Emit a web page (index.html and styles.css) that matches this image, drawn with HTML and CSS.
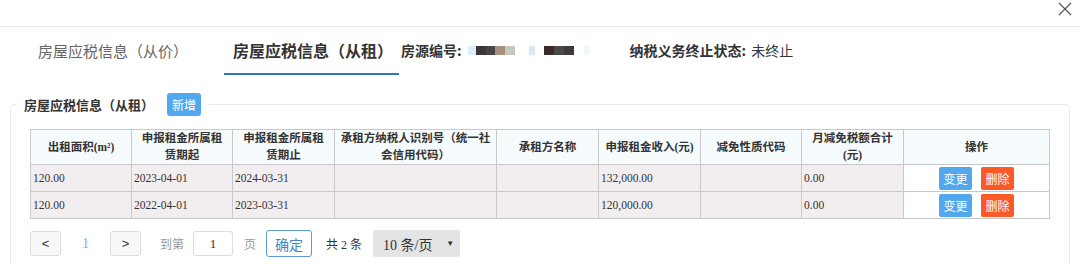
FILE: index.html
```html
<!DOCTYPE html>
<html lang="zh-CN">
<head>
<meta charset="UTF-8" />
<meta name="viewport" content="width=device-width, initial-scale=1" />
<title>房屋应税信息</title>
<link rel="stylesheet" href="styles.css">
</head>
<body>
  <div class="top-bar">
    <svg class="close-icon" width="14" height="14" viewBox="0 0 14 14">
      <path d="M1 1 L13 13 M13 1 L1 13" stroke="#555" stroke-width="1.2" fill="none" />
    </svg>
  </div>

  <div class="tabs">
    <div class="tab">房屋应税信息（从价）</div>
    <div class="tab active">房屋应税信息（从租）</div>
    <div class="info">
      <span class="info-label">房源编号:</span>
      <span class="masked">
        <i style="width:8px;background:#d8ecfa"></i><i style="width:10px;background:#3d3535"></i><i style="width:9px;background:#4a4444"></i><i style="width:10px;background:#a88f80"></i><i style="width:10px;background:#c5c8bc"></i><i style="width:14px;background:#fff"></i><i style="width:6px;background:#d6e8fa"></i><i style="width:9px;background:#fff"></i><i style="width:10px;background:#3a2a25"></i><i style="width:10px;background:#4a4747"></i><i style="width:10px;background:#3d3a3a"></i><i style="width:10px;background:#fff"></i><i style="width:6px;background:#eef8fc"></i>
      </span>
    </div>
    <div class="info status">
      <span class="info-label">纳税义务终止状态:</span>
      <span>未终止</span>
    </div>
  </div>

  <fieldset class="panel">
    <legend>
      <span class="legend-title">房屋应税信息（从租）</span>
      <button class="btn btn-blue btn-add">新增</button>
    </legend>

    <table class="data-table">
      <colgroup>
        <col style="width:101px"><col style="width:101px"><col style="width:102px">
        <col style="width:162px"><col style="width:102px"><col style="width:102px">
        <col style="width:101px"><col style="width:102px"><col style="width:146px">
      </colgroup>
      <thead>
        <tr>
          <th>出租面积(m²)</th>
          <th>申报租金所属租<br>赁期起</th>
          <th>申报租金所属租<br>赁期止</th>
          <th>承租方纳税人识别号（统一社<br>会信用代码）</th>
          <th>承租方名称</th>
          <th>申报租金收入(元)</th>
          <th>减免性质代码</th>
          <th>月减免税额合计<br>(元)</th>
          <th>操作</th>
        </tr>
      </thead>
      <tbody>
        <tr>
          <td>120.00</td>
          <td>2023-04-01</td>
          <td>2024-03-31</td>
          <td></td>
          <td></td>
          <td>132,000.00</td>
          <td></td>
          <td>0.00</td>
          <td class="actions">
            <button class="btn btn-blue">变更</button>
            <button class="btn btn-red">删除</button>
          </td>
        </tr>
        <tr>
          <td>120.00</td>
          <td>2022-04-01</td>
          <td>2023-03-31</td>
          <td></td>
          <td></td>
          <td>120,000.00</td>
          <td></td>
          <td>0.00</td>
          <td class="actions">
            <button class="btn btn-blue">变更</button>
            <button class="btn btn-red">删除</button>
          </td>
        </tr>
      </tbody>
    </table>

    <div class="pager">
      <button class="page-btn">&lt;</button>
      <span class="page-num">1</span>
      <button class="page-btn">&gt;</button>
      <span class="pager-text goto">到第</span>
      <input class="page-input" type="text" value="1" />
      <span class="pager-text">页</span>
      <button class="confirm-btn">确定</button>
      <span class="total">共 2 条</span>
      <div class="page-size">
        <span>10 条/页</span>
        <span class="arrow">▼</span>
      </div>
    </div>
  </fieldset>
</body>
</html>
```

FILE: styles.css
```css
body {
  margin: 0;
  background-color: #fff;
  color: #333;
  font-family: "Noto Sans CJK SC", "Noto Sans", sans-serif;
}
.top-bar {
  height: 27px;
  border-bottom: 1px solid #ececec;
  box-sizing: border-box;
  display: flex;
  justify-content: flex-end;
  padding: 2px 8px 0 0;
}
.close-icon {
  display: block;
}
.tabs {
  height: 48px;
  display: flex;
  align-items: stretch;
  padding-left: 28px;
}
.tab {
  display: flex;
  align-items: center;
  padding: 0 10px;
  font-size: 15px;
  color: #666;
  border-bottom: 2px solid transparent;
  box-sizing: border-box;
}
.tab.active {
  margin-left: 26px;
  padding: 0 6px 0 9px;
  font-size: 16px;
  font-weight: 700;
  color: #333;
  border-bottom-color: #2b7bb2;
}
.info {
  display: flex;
  align-items: center;
  font-size: 14px;
  color: #333;
  margin-left: 2px;
  padding-bottom: 2px;
}
.info-label {
  font-weight: 700;
  margin-right: 2px;
}
.masked {
  display: flex;
  margin-left: 4px;
}
.masked i {
  display: block;
  height: 9px;
}
.status {
  margin-left: 40px;
}
.status .info-label {
  margin-right: 5px;
}
.panel {
  margin: 18px 11px 0 10px;
  padding: 13px 19px 20px 19px;
  border: 1px solid #ebebeb;
  border-radius: 4px;
}
.panel legend {
  margin-left: -14px;
  padding: 0 8px;
  display: flex;
  align-items: center;
}
.legend-title {
  font-size: 13px;
  font-weight: 700;
  color: #333;
}
.btn {
  border: none;
  color: #fff;
  font-family: "Noto Sans CJK SC", sans-serif;
  font-size: 12px;
  width: 33px;
  height: 23px;
  padding: 0;
  border-radius: 2px;
  cursor: pointer;
}
.btn-blue {
  background-color: #52a8ef;
}
.btn-red {
  background-color: #fb5a28;
  margin-left: 9px;
}
.btn-add {
  margin-left: 13px;
  width: 34px;
  border-radius: 3px;
}
.data-table {
  width: 100%;
  table-layout: fixed;
  border-collapse: collapse;
  font-family: "Liberation Serif", "Noto Sans CJK SC", serif;
  font-size: 11.5px;
  color: #333;
}
.data-table th {
  background-color: #f6fbfe;
  border: 1px solid #c9c9c9;
  font-weight: 700;
  line-height: 17px;
  height: 34px;
  padding: 0;
  text-align: center;
}
.data-table td {
  background-color: #f2edef;
  border: 1px solid #c9c9c9;
  height: 26px;
  padding: 0 2px;
  text-align: left;
}
.data-table td.actions {
  background-color: #fff;
  text-align: center;
  padding: 0;
  font-size: 0;
}
.pager {
  margin-top: 11px;
  display: flex;
  align-items: center;
  font-family: "Liberation Serif", "Noto Sans CJK SC", serif;
}
.page-btn {
  width: 31px;
  height: 25px;
  border: 1px solid #dcdcdc;
  background-color: #f8f8f8;
  border-radius: 3px;
  color: #333;
  font-size: 13px;
  padding: 0;
  cursor: pointer;
}
.page-num {
  width: 49px;
  text-align: center;
  color: #74b5e2;
  font-size: 14px;
}
.pager-text {
  font-size: 12px;
  color: #999;
}
.goto {
  margin-left: 19px;
}
.page-input {
  width: 40px;
  height: 25px;
  box-sizing: border-box;
  margin: 0 11px 0 9px;
  border: 1px solid #dcdcdc;
  border-radius: 3px;
  text-align: center;
  font-family: "Liberation Serif", serif;
  font-size: 13px;
  color: #333;
}
.confirm-btn {
  margin-left: 10px;
  width: 46px;
  height: 27px;
  border: 1px solid #5c9dd0;
  border-radius: 3px;
  background-color: #fff;
  color: #3d8ac5;
  font-family: "Noto Sans CJK SC", sans-serif;
  font-size: 14px;
  padding: 0;
  cursor: pointer;
}
.total {
  margin-left: 14px;
  font-size: 12px;
  color: #333;
}
.page-size {
  margin-left: 11px;
  width: 87px;
  height: 27px;
  box-sizing: border-box;
  background-color: #e4e4e4;
  border-radius: 2px;
  display: flex;
  align-items: center;
  justify-content: space-between;
  padding: 0 6px 0 10px;
  font-size: 14px;
  color: #333;
}
.page-size .arrow {
  font-size: 8px;
  color: #333;
}
```
